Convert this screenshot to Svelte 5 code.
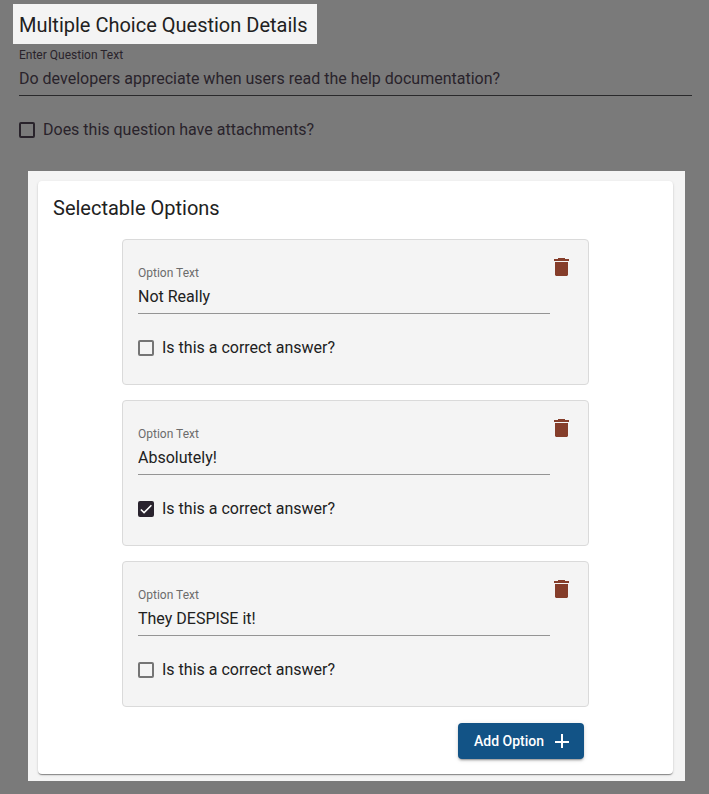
<script>
  let title = $state('Do developers appreciate when users read the help documentation?');
  let hasAttachments = $state(false);
  let nextId = 4;
  let options = $state([
    { id: 1, text: 'Not Really', correct: false },
    { id: 2, text: 'Absolutely!', correct: true },
    { id: 3, text: 'They DESPISE it!', correct: false }
  ]);

  function addOption() {
    options.push({ id: nextId++, text: '', correct: false });
  }

  function removeOption(id) {
    options = options.filter((option) => option.id !== id);
  }
</script>

{#snippet tick()}
  <svg class="tick" viewBox="0 0 24 24" aria-hidden="true">
    <path d="M1.730 12.910 8.100 19.280 22.790 4.590" />
  </svg>
{/snippet}

<main class="page">
  <h1 class="page-title">Multiple Choice Question Details</h1>

  <div class="question">
    <div class="field">
      <label for="question-text">Enter Question Text</label>
      <input id="question-text" type="text" bind:value={title} />
    </div>
    <label class="check">
      <span class="box">
        <input type="checkbox" bind:checked={hasAttachments} />
        {@render tick()}
      </span>
      <span>Does this question have attachments?</span>
    </label>
  </div>

  <section class="spotlight">
    <div class="panel">
      <h2>Selectable Options</h2>
      <div class="options">
        {#each options as option (option.id)}
          <div class="option">
            <div class="option-body">
              <div class="field">
                <label for="option-{option.id}">Option Text</label>
                <input id="option-{option.id}" type="text" bind:value={option.text} />
              </div>
              <label class="check">
                <span class="box">
                  <input type="checkbox" bind:checked={option.correct} />
                  {@render tick()}
                </span>
                <span>Is this a correct answer?</span>
              </label>
            </div>
            <button class="delete" type="button" aria-label="Delete option" onclick={() => removeOption(option.id)}>
              <svg viewBox="0 0 24 24" width="24" height="24" aria-hidden="true">
                <path d="M5 7h13v13l-1 1H6l-1-1zM19 4h-4V3H8v1H4v2h15z" />
              </svg>
            </button>
          </div>
        {/each}
      </div>
      <div class="actions">
        <button class="add" type="button" onclick={addOption}>
          <span>Add Option</span>
          <svg viewBox="0 0 24 24" width="24" height="24" aria-hidden="true">
            <path d="M11 5h2v7h6v2h-6v5h-2v-5H5v-2h6z" />
          </svg>
        </button>
      </div>
    </div>
  </section>
</main>

<style>
  :global(body) {
    background: #7a7a7a;
  }

  .page {
    box-sizing: border-box;
    min-height: 100vh;
    padding: 4px 13px 13px;
    background: #7a7a7a;
    color: #212121;
    font-family: Roboto, sans-serif;
    font-size: 16px;
    line-height: 24px;
  }

  h1,
  h2 {
    margin: 0;
    font-size: 20px;
    font-weight: 400;
    line-height: 24px;
  }

  .page-title {
    width: fit-content;
    padding: 9px 9px 7px 6px;
    background: #f4f4f4;
  }

  .question {
    padding: 3px 4px 0 6px;
    color: #29232b;
  }

  .field {
    display: flex;
    flex-direction: column;
    border-bottom: 1px solid #949494;
  }

  .question .field {
    border-color: #29292b;
  }

  .field label {
    color: #6c6c6c;
    font-size: 12px;
    line-height: 16px;
  }

  .question .field label {
    color: inherit;
  }

  .field input {
    width: 100%;
    height: 32px;
    box-sizing: border-box;
    padding: 0 0 1px;
    border: 0;
    outline: 0;
    background: transparent;
    color: inherit;
    font: inherit;
  }

  .check {
    display: flex;
    align-items: center;
    gap: 8px;
    width: fit-content;
    margin-top: 22px;
  }

  .box {
    position: relative;
    width: 16px;
    height: 16px;
  }

  .box input {
    display: block;
    appearance: none;
    width: 16px;
    height: 16px;
    margin: 0;
    border: 2px solid #757575;
    border-radius: 2px;
  }

  .question .box input {
    border-color: #29232b;
  }

  .box input:checked {
    border-color: #29232e;
    background: #29232e;
  }

  .tick {
    position: absolute;
    inset: 2px;
    visibility: hidden;
    pointer-events: none;
    fill: none;
    stroke: #fff;
    stroke-width: 3.12;
  }

  .box input:checked + .tick {
    visibility: visible;
  }

  .spotlight {
    margin: 29px 11px 0 15px;
    padding: 10px 12px 7px 10px;
    background: #f4f4f4;
  }

  .panel {
    padding: 15px 0;
    border-radius: 4px;
    background: #fff;
    box-shadow:
      0 2px 1px -1px rgb(0 0 0 / 20%),
      0 1px 1px rgb(0 0 0 / 24%),
      0 1px 3px rgb(0 0 0 / 12%);
  }

  h2 {
    padding: 0 15px;
  }

  .options {
    display: flex;
    flex-direction: column;
    gap: 15px;
    margin: 19px 84px 0;
  }

  .option {
    display: flex;
    box-sizing: border-box;
    min-height: 146px;
    padding: 15px 14px 15px 15px;
    border: 1px solid #dadada;
    border-radius: 4px;
    background: #f4f4f4;
  }

  .option-body {
    flex: 1;
    padding-top: 10px;
  }

  .delete {
    width: 24px;
    height: 24px;
    padding: 0;
    border: 0;
    background: transparent;
    cursor: pointer;
  }

  .delete svg {
    display: block;
    fill: #853d2a;
  }

  .actions {
    display: flex;
    justify-content: flex-end;
    margin: 16px 89px 0;
  }

  .add {
    display: flex;
    align-items: center;
    gap: 6px;
    height: 36px;
    padding: 0 10px 0 16px;
    border: 0;
    border-radius: 4px;
    background: #125386;
    box-shadow:
      0 3px 1px -2px rgb(0 0 0 / 20%),
      0 2px 2px rgb(0 0 0 / 14%),
      0 1px 5px rgb(0 0 0 / 12%);
    color: #fff;
    font: 500 14px/20px Roboto, sans-serif;
    cursor: pointer;
  }

  .add svg {
    fill: #fff;
  }
</style>
